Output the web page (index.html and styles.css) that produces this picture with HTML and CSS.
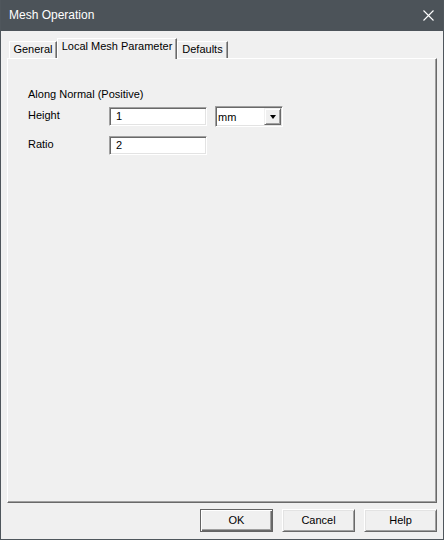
FILE: index.html
```html
<!DOCTYPE html>
<html>
<head>
<meta charset="utf-8">
<link rel="stylesheet" href="styles.css">
</head>
<body>
<div class="window">
  <div class="titlebar">
    <span class="title">Mesh Operation</span>
    <svg class="close" width="11" height="11" viewBox="0 0 11 11"><path d="M0.5 0.5L10.5 10.5M10.5 0.5L0.5 10.5" stroke="#fff" stroke-width="1.1" fill="none"/></svg>
  </div>
  <div class="client">
    <div class="tabs">
      <div class="tab tab-general">General</div>
      <div class="tab tab-active">Local Mesh Parameter</div>
      <div class="tab tab-defaults">Defaults</div>
    </div>
    <div class="panel">
      <div class="group-label">Along Normal (Positive)</div>
      <div class="form">
        <div class="label">Height</div>
        <div class="field-row">
          <div class="input">1</div>
          <div class="combo">
            <span class="combo-text">mm</span>
            <span class="combo-btn"><span class="arrow"></span></span>
          </div>
        </div>
        <div class="label">Ratio</div>
        <div class="field-row">
          <div class="input">2</div>
        </div>
      </div>
    </div>
    <div class="buttons">
      <div class="btn btn-default">OK</div>
      <div class="btn">Cancel</div>
      <div class="btn">Help</div>
    </div>
  </div>
</div>
</body>
</html>
```
FILE: styles.css
```css
html, body {
  margin: 0;
  padding: 0;
  background: #f0f0f0;
}
body {
  font-family: "Liberation Sans", Arial, sans-serif;
  font-size: 11px;
  color: #000;
}
.window {
  width: 444px;
  height: 540px;
  box-sizing: border-box;
  border: 1px solid #4f565c;
  border-top: none;
  display: flex;
  flex-direction: column;
  background: #f0f0f0;
}
.titlebar {
  height: 31px;
  flex: none;
  background: #4c5359;
  display: flex;
  align-items: center;
  justify-content: space-between;
  padding: 0 9px 0 8px;
}
.title {
  color: #fff;
  font-size: 12px;
  line-height: 15px;
}
.close {
  display: block;
  margin-top: 0;
}
.client {
  flex: 1;
  display: flex;
  flex-direction: column;
  padding: 7px 6px 7px 6px;
}
.tabs {
  height: 21px;
  margin-bottom: -1px;
  margin-left: 2px;
  display: flex;
  align-items: flex-end;
  position: relative;
  z-index: 1;
}
.tab {
  box-sizing: border-box;
  height: 17px;
  margin-bottom: 1px;
  border-left: 1px solid #fff;
  border-top: 1px solid #fff;
  border-right: 1px solid #696969;
  box-shadow: inset -1px 0 #a0a0a0;
  background: #f0f0f0;
  text-align: center;
  line-height: 13px;
  padding-top: 1px;
  white-space: nowrap;
}
.tab-general { width: 48px; }
.tab-active {
  width: 120px;
  height: 21px;
  margin-bottom: 0;
}
.tab-defaults { width: 51px; }
.panel {
  box-sizing: border-box;
  height: 445px;
  border-top: 1px solid #fff;
  border-left: 1px solid #fff;
  border-right: 1px solid #696969;
  border-bottom: 1px solid #696969;
  box-shadow: inset -1px -1px #a0a0a0;
  padding: 29px 20px 0 20px;
}
.group-label {
  line-height: 13px;
}
.form {
  margin-top: 5px;
  display: grid;
  grid-template-columns: 81px auto;
  row-gap: 9px;
  align-items: center;
}
.label {
  line-height: 13px;
  margin-top: -2px;
}
.field-row {
  display: flex;
  align-items: center;
  gap: 8px;
  min-height: 19px;
}
.input {
  box-sizing: border-box;
  width: 98px;
  height: 19px;
  background: #fff;
  border: 1px solid;
  border-color: #a0a0a0 #fff #fff #a0a0a0;
  box-shadow: inset 1px 1px #696969, inset -1px -1px #e3e3e3;
  padding-left: 6px;
  line-height: 17px;
}
.combo {
  box-sizing: border-box;
  width: 68px;
  height: 21px;
  background: #fff;
  border: 1px solid;
  border-color: #a0a0a0 #fff #fff #a0a0a0;
  box-shadow: inset 1px 1px #696969, inset -1px -1px #e3e3e3;
  display: flex;
  align-items: center;
  justify-content: space-between;
  padding: 1px 1px 1px 2px;
}
.combo-text {
  line-height: 13px;
  padding-top: 2px;
}
.combo-btn {
  box-sizing: border-box;
  width: 17px;
  height: 17px;
  background: #f0f0f0;
  border: 1px solid;
  border-color: #f0f0f0 #696969 #696969 #f0f0f0;
  box-shadow: inset 1px 1px #fff, inset -1px -1px #a0a0a0;
  display: flex;
  align-items: center;
  justify-content: center;
}
.arrow {
  width: 0;
  height: 0;
  border-left: 3.5px solid transparent;
  border-right: 3.5px solid transparent;
  border-top: 4px solid #000;
  margin-top: 1px;
}
.buttons {
  margin-top: 6px;
  display: flex;
  justify-content: flex-end;
  gap: 9px;
}
.btn {
  box-sizing: border-box;
  width: 73px;
  height: 23px;
  background: #f0f0f0;
  border: 1px solid;
  border-color: #fff #696969 #696969 #fff;
  box-shadow: inset 1px 1px #e3e3e3, inset -1px -1px #a0a0a0;
  display: flex;
  align-items: center;
  justify-content: center;
  line-height: 13px;
  font-size: 11px;
}
.btn-default {
  border-color: #646464;
  box-shadow: inset 1px 1px #fff, inset -1px -1px #696969, inset -2px -2px #a0a0a0;
}
```
